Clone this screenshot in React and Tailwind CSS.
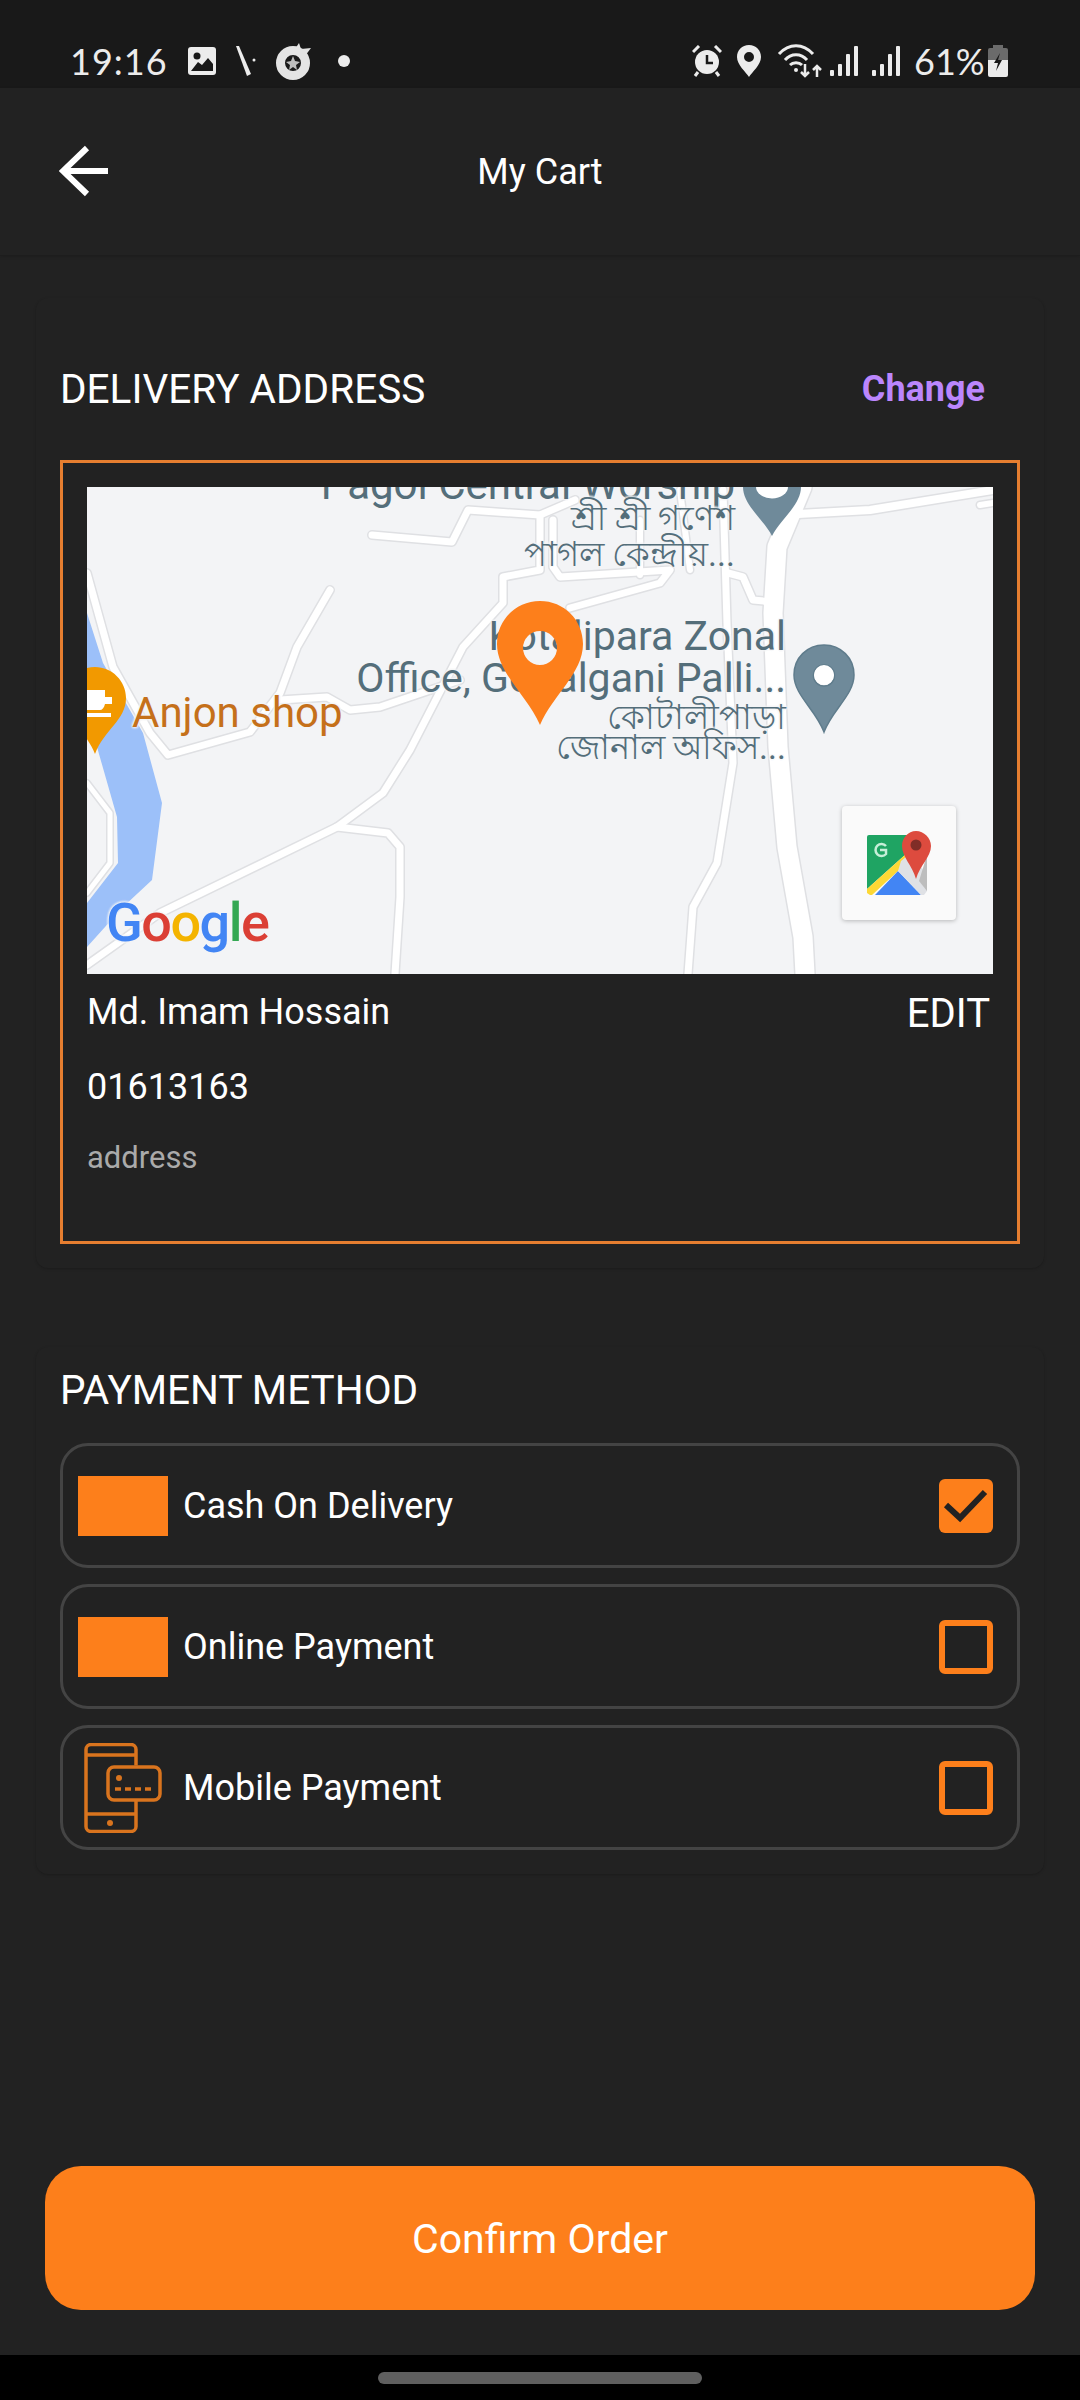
import React from 'react';

const halo = '[text-shadow:0_0_3px_#f3f4f6,0_0_3px_#f3f4f6,0_0_3px_#f3f4f6,0_0_3px_#f3f4f6]';

const StatusLeft = () => (
  <div className="flex items-center">
    <span className="w-[100px] text-[36px] leading-[44px] tracking-[1px] text-[#ececec] font-['Lato',sans-serif]">19:16</span>
    <svg className="ml-[18px]" width="28" height="28" viewBox="0 0 28 28">
      <rect width="28" height="28" rx="3" fill="#ececec" />
      <circle cx="9" cy="9" r="3.5" fill="#191919" />
      <path d="M3 24 L10 15 L14 18 L20 11 L25 17 V24 Z" fill="#191919" />
    </svg>
    <svg className="ml-[19px]" width="24" height="30" viewBox="0 0 24 30">
      <path d="M1 0 L4 0 L16 28 L12 30 Z" fill="#ececec" />
      <circle cx="19" cy="14" r="1.5" fill="#ececec" />
    </svg>
    <svg className="ml-[16px]" width="38" height="38" viewBox="0 0 38 38">
      <circle cx="18" cy="21" r="12.5" fill="none" stroke="#e4e4e4" strokeWidth="9" />
      <path d="M18 14 L20 19 L25 20 L21 23 L22 28 L18 25 L14 28 L15 23 L11 20 L16 19 Z" fill="#bdbdbd" />
      <path d="M12 3 L20 7 L24 1 L26 7 L36 6 L30 14 L24 9 Z" fill="#e4e4e4" />
    </svg>
    <div className="ml-[25px] h-[12px] w-[12px] rounded-full bg-[#ececec]" />
  </div>
);

const StatusRight = () => (
  <div className="flex items-center">
    <svg width="30" height="32" viewBox="0 0 30 32">
      <circle cx="15" cy="17" r="12" fill="#ececec" />
      <path d="M15 10 V18 H21" fill="none" stroke="#191919" strokeWidth="2.5" />
      <path d="M1 7 L7 1 M29 7 L23 1" stroke="#ececec" strokeWidth="3" />
      <path d="M6 27 L3 31 M24 27 L27 31" stroke="#ececec" strokeWidth="3" />
    </svg>
    <svg className="ml-[15px]" width="24" height="32" viewBox="0 0 24 32">
      <path fillRule="evenodd" d="M12 0 C19 0 24 5 24 12 C24 20 15 27 12 32 C9 27 0 20 0 12 C0 5 5 0 12 0 Z M12 7 A5 5 0 1 0 12 17 A5 5 0 1 0 12 7 Z" fill="#ececec" />
    </svg>
    <svg className="ml-[16px]" width="46" height="34" viewBox="0 0 46 34">
      <path d="M2 10 C12 -1 26 -1 36 10" fill="none" stroke="#ececec" strokeWidth="3" />
      <path d="M8 16 C14 9 24 9 30 16" fill="none" stroke="#ececec" strokeWidth="3" />
      <path d="M13 21 C16 18 22 18 25 21" fill="none" stroke="#ececec" strokeWidth="3" />
      <circle cx="19" cy="26" r="2" fill="#ececec" />
      <path d="M28 20 V32 M24 28 L28 32 L32 28 M40 33 V22 M36 26 L40 22 L44 26" fill="none" stroke="#ececec" strokeWidth="2.5" />
    </svg>
    <svg className="ml-[7px]" width="28" height="30" viewBox="0 0 28 30">
      <rect x="0" y="24" width="4" height="6" rx="1" fill="#ececec" />
      <rect x="8" y="18" width="4" height="12" rx="1" fill="#ececec" />
      <rect x="16" y="8" width="4" height="22" rx="1" fill="#ececec" />
      <rect x="24" y="0" width="4" height="30" rx="1" fill="#ececec" />
    </svg>
    <svg className="ml-[14px]" width="28" height="30" viewBox="0 0 28 30">
      <rect x="0" y="24" width="4" height="6" rx="1" fill="#ececec" />
      <rect x="8" y="18" width="4" height="12" rx="1" fill="#ececec" />
      <rect x="16" y="8" width="4" height="22" rx="1" fill="#ececec" />
      <rect x="24" y="0" width="4" height="30" rx="1" fill="#ececec" />
    </svg>
    <span className="ml-[14px] w-[70px] text-[36px] leading-[44px] text-[#ececec] font-['Lato',sans-serif]">61%</span>
    <svg className="ml-[4px]" width="20" height="32" viewBox="0 0 20 32">
      <rect x="5" y="0" width="10" height="4" fill="#6b6b6b" />
      <path d="M2 3 H18 A2 2 0 0 1 20 5 V15 H0 V5 A2 2 0 0 1 2 3 Z" fill="#6b6b6b" />
      <path d="M0 15 H20 V30 A2 2 0 0 1 18 32 H2 A2 2 0 0 1 0 30 Z" fill="#ececec" />
      <path d="M12 8 L6 18 H10 L8 26 L14 15 H10 Z" fill="#191919" />
    </svg>
  </div>
);

// screen coordinates, the viewBox is the map's place on the page
const roads = [
  { d: 'M802 487 L777 547 L773 613 L778 747 L787 847 L803 937 L805 974', w: 19 },
  { d: 'M798 514 L870 510 L993 490', w: 8 },
  { d: 'M980 505 L993 503', w: 6 },
  { d: 'M723 490 L727 623 L733 763 L717 863 L693 907 L688 974', w: 7 },
  { d: 'M728 573 L743 577 L753 600 L773 602', w: 7 },
  { d: 'M372 535 L452 542 L468 510 L540 515 L575 500', w: 7 },
  { d: 'M540 515 L540 570 L503 577 L503 603 L463 647 L410 750 L383 793 L337 827 L160 913 L87 965', w: 7 },
  { d: 'M337 827 L388 833 L400 847 L400 897 L395 974', w: 7 },
  { d: 'M87 573 L113 667 L150 733 L168 755 L250 732 L280 693 L297 647 L330 590', w: 7 },
  { d: 'M280 700 L327 697 L350 710 L380 707 L460 680', w: 7 },
  { d: 'M87 783 L110 813 L110 863 L87 893', w: 5 },
  { d: 'M570 608 L660 583 L670 570 L560 577 L553 567 L553 520', w: 7 },
  { d: 'M640 520 L640 575 M680 490 L690 570', w: 6 },
];

const MapBase = () => (
  <svg className="absolute inset-0" width="906" height="487" viewBox="87 487 906 487">
    <path d="M87 613 L103 663 L143 733 L162 803 L152 880 L123 907 L87 947 V903 L118 863 L117 817 L97 747 L87 700 Z" fill="#9cc0f9" />
    {roads.map((r) => (
      <path key={r.d} d={r.d} fill="none" stroke="#dfe0e3" strokeWidth={r.w + 3} strokeLinejoin="round" strokeLinecap="round" />
    ))}
    {roads.map((r) => (
      <path key={r.d} d={r.d} fill="none" stroke="#ffffff" strokeWidth={r.w} strokeLinejoin="round" strokeLinecap="round" />
    ))}
    <path d="M772 536 C764 520 743 505 743 487 H801 C801 505 780 520 772 536 Z" fill="#6f8a9a" />
    <path d="M756 487 A14 10 0 0 0 788 487 Z" fill="#ffffff" />
    <path fillRule="evenodd" d="M824 645 C841 645 854 658 854 675 C854 695 832 710 824 732 C816 710 794 695 794 675 C794 658 807 645 824 645 Z M824 665 A10.500 10.500 0 1 0 824 686 A10.500 10.500 0 1 0 824 665 Z" fill="#6f8a9a" stroke="#5f7c8c" strokeWidth="1.500" />
    <circle cx="824" cy="675" r="10" fill="#ffffff" />
    <path d="M95 667 C112 667 126 681 126 698 C126 720 104 730 95 754 C86 730 64 720 64 698 C64 681 78 667 95 667 Z" fill="#f29900" />
    <path d="M85 690 H105 V697 H112 V704 H105 C104 708 102 710 100 710 H87 Z" fill="#ffffff" />
    <rect x="80" y="713" width="31" height="4" fill="#ffffff" />
  </svg>
);

const MapsIcon = () => (
  <svg width="64" height="64" viewBox="0 0 64 64">
    <path d="M2 4 H40 L39 23 L0 58 V6 A2 2 0 0 1 2 4 Z" fill="#1fa463" />
    <path d="M39 23 L44 28 L5 64 H3 L0 62 V58 Z" fill="#fdd835" />
    <path d="M8 64 L31 40 L54 64 Z" fill="#4285f4" />
    <path d="M34 30 L44 22 L60 44 V60 L57 64 H54 L31 40 Z" fill="#dfe1e5" />
    <path d="M60 24 V60 L52 50 Z" fill="#bdbdbd" />
    <path d="M49 0 C57 0 64 7 64 15 C64 26 53 34 49 48 C45 34 35 26 35 15 C35 7 41 0 49 0 Z" fill="#dd4b3e" />
    <circle cx="49" cy="14" r="5.500" fill="#802d27" />
    <path d="M19 15 A6 6 0 1 0 19 23 V19 H13" fill="none" stroke="#c6efd8" strokeWidth="2.500" />
  </svg>
);

const MapView = () => (
  <div className="relative h-[487px] w-[906px] overflow-hidden bg-[#f3f4f6] font-['Roboto',sans-serif]">
    <MapBase />
    <div className={`absolute right-[258px] top-[-25px] whitespace-nowrap text-[42px] leading-[46px] text-[#546e7a] ${halo}`}>Pagol Central Worship</div>
    <div className={`absolute right-[258px] top-[9px] whitespace-nowrap text-[34px] leading-[44px] text-[#546e7a] ${halo}`}>শ্রী শ্রী গণেশ</div>
    <div className={`absolute right-[258px] top-[45px] whitespace-nowrap text-[34px] leading-[44px] text-[#546e7a] ${halo}`}>পাগল কেন্দ্রীয়...</div>
    <div className={`absolute right-[207px] top-[128px] whitespace-nowrap text-right text-[41px] leading-[42px] text-[#546e7a] ${halo}`}>
      Kotalipara Zonal
      <br />
      Office, Gopalgani Palli...
    </div>
    <div className={`absolute right-[207px] top-[208px] whitespace-nowrap text-[34px] leading-[44px] text-[#546e7a] ${halo}`}>কোটালীপাড়া</div>
    <div className={`absolute right-[207px] top-[238px] whitespace-nowrap text-[34px] leading-[44px] text-[#546e7a] ${halo}`}>জোনাল অফিস...</div>
    <div className={`absolute left-[45px] top-[203px] whitespace-nowrap text-[42px] leading-[46px] text-[#c5701a] ${halo}`}>Anjon shop</div>
    <div className={`absolute left-[19px] top-[406px] whitespace-nowrap text-[54px] font-medium leading-[60px] tracking-[-1.5px] ${halo}`}>
      <span className="text-[#4285f4]">G</span>
      <span className="text-[#db3f35]">o</span>
      <span className="text-[#f4b400]">o</span>
      <span className="text-[#4285f4]">g</span>
      <span className="text-[#34a853]">l</span>
      <span className="text-[#db3f35]">e</span>
    </div>
    {/* the hole shows the labels underneath */}
    <svg className="absolute left-[410px] top-[114px]" width="86" height="124" viewBox="0 0 86 124">
      <path fillRule="evenodd" d="M43 0 C67 0 86 19 86 43 C86 72 56 94 43 124 C30 94 0 72 0 43 C0 19 19 0 43 0 Z M43 30 A17 17 0 1 0 43 64 A17 17 0 1 0 43 30 Z" fill="#fd7f1b" />
    </svg>
    <div className="absolute left-[755px] top-[319px] flex h-[114px] w-[114px] items-center justify-center rounded-[4px] bg-[#fafafa] shadow-[0_1px_4px_rgba(0,0,0,0.25)]">
      <MapsIcon />
    </div>
  </div>
);

const CashIcon = () => <div className="h-[60px] w-[90px] bg-[#fd7f1b]" />;

const MobileIcon = () => (
  <svg width="90" height="90" viewBox="0 0 90 90">
    <g fill="none" stroke="#d9741e" strokeWidth="3.500">
      <path d="M58 24 V8 A5 5 0 0 0 53 3 H13 A5 5 0 0 0 8 8 V85 A5 5 0 0 0 13 90 H53 A5 5 0 0 0 58 85 V58" transform="translate(0,-1.500)" />
      <path d="M8 12 H58 M8 71 H58" />
      <rect x="30" y="24" width="52" height="33" rx="6" />
      <path d="M37 46 H76" strokeDasharray="6 4" />
    </g>
    <circle cx="41" cy="35" r="3" fill="#d9741e" />
    <circle cx="32" cy="80" r="3" fill="#d9741e" />
  </svg>
);

const PaymentRow = ({ icon, label, checked }) => (
  <div className="flex h-[125px] items-center rounded-[28px] border-[3px] border-[#444444] pl-[15px] pr-[24px]">
    <div className="flex w-[90px] items-center justify-center">{icon}</div>
    <span className="ml-[15px] text-[36px] leading-[44px] text-white">{label}</span>
    {checked ? (
      <div className="ml-auto h-[54px] w-[54px] rounded-[6px] bg-[#fd7f1b]">
        <svg width="54" height="54" viewBox="0 0 54 54">
          <path d="M7 26 L21 39 L46 13" fill="none" stroke="#222222" strokeWidth="6" />
        </svg>
      </div>
    ) : (
      <div className="ml-auto h-[54px] w-[54px] rounded-[6px] border-[6px] border-[#fd7f1b]" />
    )}
  </div>
);

export default function App() {
  return (
    <div className="flex h-[2400px] w-[1080px] flex-col overflow-hidden bg-[#222222] font-['Roboto',sans-serif] text-white">
      <div className="flex h-[88px] shrink-0 items-end justify-between bg-[#191919] pb-[5px] pl-[70px] pr-[72px]">
        <StatusLeft />
        <StatusRight />
      </div>

      <header className="relative flex h-[168px] shrink-0 items-center justify-center border-b border-[#1d1d1d] shadow-[0_1px_3px_rgba(0,0,0,0.15)]">
        <svg className="absolute left-[59px] top-[57px]" width="52" height="52" viewBox="0 0 52 52">
          <path d="M49 26 H4 M28 3 L4 26 L28 49" fill="none" stroke="#ffffff" strokeWidth="6" />
        </svg>
        <h1 className="text-[36px] font-normal leading-[44px]">My Cart</h1>
      </header>

      <main className="flex flex-1 flex-col px-[36px]">
        <section className="mt-[42px] rounded-[12px] bg-[#222222] px-[24px] pb-[24px] pt-[69px] shadow-[0_1px_3px_rgba(0,0,0,0.2)]">
          <div className="flex items-center justify-between pr-[35px]">
            <h2 className="text-[40.500px] font-normal leading-[44px]">DELIVERY ADDRESS</h2>
            <button className="text-[36px] font-bold leading-[44px] text-[#bb86fc]">Change</button>
          </div>
          <div className="mt-[49px] border-[3px] border-[#e67e30] px-[24px] pb-[65px] pt-[24px]">
            <MapView />
            <div className="mt-[18px] flex items-start justify-between pr-[3px]">
              <span className="text-[36px] leading-[40px]">Md. Imam Hossain</span>
              <span className="text-[40px] leading-[44px]">EDIT</span>
            </div>
            <p className="mt-[31px] text-[36px] leading-[40px]">01613163</p>
            <p className="mt-[33px] text-[31px] leading-[36px] text-[#aaaaaa]">address</p>
          </div>
        </section>

        <section className="mt-[79px] rounded-[12px] bg-[#222222] px-[24px] pb-[24px] pt-[21px] shadow-[0_1px_3px_rgba(0,0,0,0.2)]">
          <h2 className="text-[40.500px] font-normal leading-[44px]">PAYMENT METHOD</h2>
          <div className="mt-[31px] flex flex-col gap-[16px]">
            <PaymentRow icon={<CashIcon />} label="Cash On Delivery" checked />
            <PaymentRow icon={<CashIcon />} label="Online Payment" />
            <PaymentRow icon={<MobileIcon />} label="Mobile Payment" />
          </div>
        </section>

        <button className="mx-[9px] mb-[45px] mt-auto h-[144px] rounded-[36px] bg-[#fd7f1b] pt-[2px] text-[41px] leading-[48px] text-white">
          Confirm Order
        </button>
      </main>

      <div className="flex h-[45px] shrink-0 justify-center bg-black pt-[17px]">
        <div className="h-[12px] w-[324px] rounded-full bg-[#5f5f5f]" />
      </div>
    </div>
  );
}
